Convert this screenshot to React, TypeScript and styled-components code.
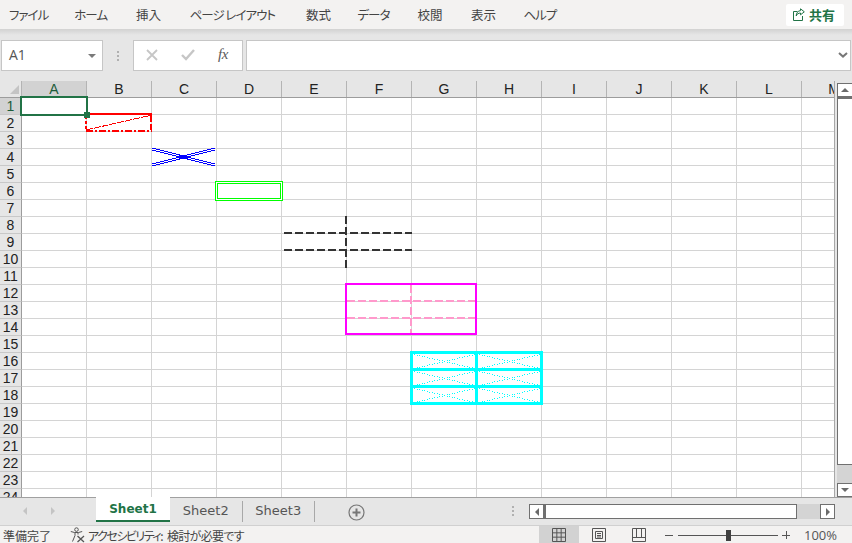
import React from "react"
import styled, { createGlobalStyle } from "styled-components"

const green = "#217346"
const jp = `"Noto Sans CJK JP", "Liberation Sans", sans-serif`

const GlobalStyle = createGlobalStyle`
  html, body {
    margin: 0;
    padding: 0;
    background: #e6e6e6;
    overflow: hidden;
  }
  * {
    box-sizing: border-box;
  }
`

const Page = styled.div`
  width: 852px;
  height: 543px;
  display: flex;
  flex-direction: column;
  overflow: hidden;
  font-family: ${jp};
  font-feature-settings: "palt";
`

const MenuBar = styled.div`
  height: 29px;
  flex: none;
  display: flex;
  align-items: center;
  padding: 0 9px;
  background: #f3f2f1;
`

const MenuItem = styled.div<{ $kana?: boolean; $gap: number }>`
  font-size: 12.5px;
  line-height: 29px;
  margin-right: ${p => p.$gap}px;
  letter-spacing: ${p => (p.$kana ? -1 : 0)}px;
  color: #444;
  white-space: nowrap;
`

const ShareButton = styled.div`
  margin-left: auto;
  width: 58px;
  height: 22px;
  margin-right: -1px;
  display: flex;
  align-items: center;
  gap: 4px;
  padding-left: 7px;
  background: #fff;
  border-radius: 2px;
  color: ${green};
  font-size: 13px;
  font-weight: 700;
`

const FormulaBar = styled.div`
  height: 52px;
  flex: none;
  display: flex;
  align-items: flex-start;
  padding: 11px 1px 0 1px;
  background: linear-gradient(#d2d2d1, #e6e6e6 6px);
`

const FieldBox = styled.div`
  height: 31px;
  background: #fff;
  border: 1px solid #c6c6c6;
  display: flex;
  align-items: center;
`

const NameBox = styled(FieldBox)`
  width: 102px;
  padding: 0 6px 3px 7px;
  justify-content: space-between;
  font-family: "Open Sans", sans-serif;
  font-size: 14px;
  color: #555;
`

const Caret = styled.span`
  width: 0;
  height: 0;
  margin-top: 3px;
  border-left: 4px solid transparent;
  border-right: 4px solid transparent;
  border-top: 4px solid #7a7a7a;
`

const GripColumn = styled.div`
  width: 30px;
  height: 31px;
  display: flex;
  align-items: center;
  justify-content: center;
`

const Grip = styled.div`
  display: flex;
  flex-direction: column;
  gap: 2px;

  span {
    width: 2px;
    height: 2px;
    background: #b0b0b0;
  }
`

const ActionBox = styled(FieldBox)`
  width: 110px;
  margin-right: 3px;
  padding: 0 0 2px 12px;
`

const FxLabel = styled.span`
  margin-left: 23px;
  font-family: "Liberation Serif", serif;
  font-style: italic;
  font-size: 15px;
  color: #5a5a5a;
  letter-spacing: -0.5px;
`

const InputBox = styled(FieldBox)`
  flex: 1;
  justify-content: flex-end;
  padding: 0 2px 2px 0;
`

const SheetArea = styled.div`
  height: 416px;
  flex: none;
  display: flex;
  background: #e6e6e6;
`

const GridPane = styled.div`
  position: relative;
  width: 835px;
  flex: none;
  overflow: hidden;
  background: #fff;
  border-right: 1px solid #a8a8a8;
`

const HeaderRow = styled.div`
  height: 17px;
  display: flex;
  background: #e6e6e6;
  border-bottom: 1px solid #9c9c9c;
`

const Corner = styled.div`
  width: 22px;
  flex: none;
  position: relative;
  border-right: 1px solid #b4b4b4;

  &::after {
    content: "";
    position: absolute;
    left: 10px;
    top: 4px;
    width: 9px;
    height: 9px;
    background: #c4c4c4;
    clip-path: polygon(100% 0, 100% 100%, 0 100%);
  }
`

const ColHeader = styled.div<{ $active?: boolean }>`
  width: 65px;
  flex: none;
  text-align: center;
  font-family: "Liberation Sans", sans-serif;
  font-size: 14px;
  line-height: 17px;
  color: ${p => (p.$active ? "#1d5c3a" : "#222")};
  background: ${p => (p.$active ? "#d2d2d2" : "transparent")};
  border-right: 1px solid #b4b4b4;
`

const Row = styled.div`
  height: 17px;
  display: flex;
`

const RowHeader = styled.div<{ $active?: boolean }>`
  width: 22px;
  flex: none;
  text-align: center;
  font-family: "Liberation Sans", sans-serif;
  font-size: 14px;
  line-height: 17px;
  color: ${p => (p.$active ? "#1d5c3a" : "#222")};
  background: ${p => (p.$active ? "#d2d2d2" : "#e6e6e6")};
  border-right: 1px solid #9c9c9c;
  border-bottom: 1px solid #c8c8c8;
`

const Cell = styled.div`
  width: 65px;
  flex: none;
  border-right: 1px solid #d4d4d4;
  border-bottom: 1px solid #d4d4d4;
`

const Selection = styled.div`
  position: absolute;
  left: 20px;
  top: 15px;
  width: 68px;
  height: 20px;
  border: 2px solid ${green};
`

const Handle = styled.div`
  position: absolute;
  right: -4px;
  bottom: -4px;
  width: 6px;
  height: 6px;
  background: ${green};
  border: 1px solid ${green};
`

const ShapesLayer = styled.svg`
  position: absolute;
  left: 0;
  top: 0;
  pointer-events: none;
`

const VScroll = styled.div`
  flex: 1;
  margin-left: 2px;
  padding-top: 2px;
  display: flex;
  flex-direction: column;
  background: #d4d4d4;
  box-shadow: inset 0 2px 0 #e6e6e6;
`

const VButton = styled.div`
  height: 14px;
  flex: none;
  display: flex;
  align-items: center;
  justify-content: center;
  background: #fff;
  border: 1px solid #707070;
  border-right: none;
`

const VThumb = styled.div`
  height: 368px;
  flex: none;
  background: #fff;
  border-left: 1px solid #707070;
  border-top: 2px solid #707070;
  border-bottom: 1px solid #707070;
`

const VSpacer = styled.div`
  flex: 1;
`

const Arrow = styled.span<{ $dir: "up" | "down" | "left" | "right"; $color?: string }>`
  width: 0;
  height: 0;
  border-style: solid;
  border-color: transparent;
  ${p => {
    const color = p.$color || "#6a6a6a"
    if (p.$dir === "up") return `border-width: 0 4px 4px; border-bottom-color: ${color};`
    if (p.$dir === "down") return `border-width: 4px 4px 0; border-top-color: ${color};`
    if (p.$dir === "left") return `border-width: 4px 4px 4px 0; border-right-color: ${color};`
    return `border-width: 4px 0 4px 4px; border-left-color: ${color};`
  }}
`

const TabBar = styled.div`
  height: 28px;
  flex: none;
  display: flex;
  align-items: flex-start;
  background: #e6e6e6;
  border-top: 1px solid #a0a0a0;
`

const TabNav = styled.div`
  width: 96px;
  height: 26px;
  flex: none;
  display: flex;
  align-items: center;
  gap: 24px;
  padding-left: 23px;
`

const ActiveTab = styled.div`
  width: 74px;
  height: 25px;
  margin-top: -1px;
  flex: none;
  text-align: center;
  background: #fff;
  border-bottom: 2px solid ${green};
  color: ${green};
  font-family: "DejaVu Sans", sans-serif;
  font-size: 12px;
  font-weight: 700;
  line-height: 25px;
`

const Tab = styled.div`
  width: 72.5px;
  height: 21px;
  margin-top: 3px;
  flex: none;
  text-align: center;
  border-right: 1px solid #a8a8a8;
  color: #555;
  font-family: "DejaVu Sans", sans-serif;
  font-size: 13px;
  line-height: 19px;
`

const AddSheet = styled.div`
  margin: 4px 0 0 33px;
  width: 17px;
  height: 17px;
  flex: none;
  color: #777;
`

const TabGrip = styled(Grip)`
  margin: 8px 15px 0 auto;
`

const HScroll = styled.div`
  width: 306px;
  height: 15px;
  margin: 6px 17px 0 0;
  flex: none;
  display: flex;
  background: #d4d4d4;
`

const HButton = styled.div`
  width: 15px;
  flex: none;
  display: flex;
  align-items: center;
  justify-content: center;
  background: #fff;
  border: 1px solid #707070;
`

const HThumb = styled.div`
  width: 253px;
  flex: none;
  background: #fff;
  border: 1px solid #707070;
  border-left: 2px solid #707070;
`

const StatusBar = styled.div`
  flex: 1;
  display: flex;
  align-items: center;
  padding-left: 3px;
  background: #f3f2f1;
  border-top: 1px solid #d0d0d0;
  color: #444;
  font-size: 12px;
  font-feature-settings: normal;
`

const AccessNote = styled.div`
  margin-left: 19px;
  display: flex;
  align-items: center;
  gap: 3px;
  font-size: 12px;
  font-feature-settings: "palt";
  white-space: nowrap;
`

const AccessLabel = styled.span`
  letter-spacing: -1.5px;
  margin-right: 2px;
`

const AccessState = styled.span`
  letter-spacing: -0.7px;
`

const ViewButtons = styled.div`
  margin-left: auto;
  display: flex;
  height: 100%;
`

const ViewButton = styled.div<{ $active?: boolean }>`
  width: 40px;
  display: flex;
  align-items: center;
  justify-content: center;
  background: ${p => (p.$active ? "#d2d2d2" : "transparent")};
`

const Zoom = styled.div`
  width: 187px;
  margin-left: 6px;
  flex: none;
  display: flex;
  align-items: center;
  color: #555;
`

const ZoomSign = styled.span`
  width: 8px;
  height: 1px;
  flex: none;
  position: relative;
  background: #555;
`

const PlusBar = styled.span`
  position: absolute;
  left: 3.5px;
  top: -3.5px;
  width: 1px;
  height: 8px;
  background: #555;
`

const ZoomTrack = styled.div`
  position: relative;
  width: 100px;
  height: 1px;
  margin: 0 4px 0 5px;
  flex: none;
  background: #555;
`

const ZoomThumb = styled.div`
  position: absolute;
  left: 48px;
  top: -5px;
  width: 5px;
  height: 11px;
  background: #404040;
`

const ZoomValue = styled.div`
  flex: 1;
  padding-left: 14px;
  font-family: "Open Sans", sans-serif;
  font-size: 13px;
  white-space: nowrap;
`

const menus = [
  { label: "ファイル", kana: true, gap: 26 },
  { label: "ホーム", kana: true, gap: 29 },
  { label: "挿入", gap: 28.5 },
  { label: "ページ レイアウト", kana: true, gap: 31 },
  { label: "数式", gap: 26.5 },
  { label: "データ", kana: true, gap: 28 },
  { label: "校閲", gap: 28.5 },
  { label: "表示", gap: 27.5 },
  { label: "ヘルプ", kana: true, gap: 0 },
]
const columns = "ABCDEFGHIJKLM".split("")
const rows = Array.from({ length: 24 }, (_, i) => i + 1)

// the thin dotted diagonals of G16:H18, one pixel per dot
const dottedCross = (left: number, top: number) => {
  let d = ""
  for (let step = 0; step <= 24; step++) {
    const x = left + Math.round(step * 2.5)
    const dy = Math.round((step / 24) * 14)
    d += `M${x} ${top + dy}h1v1h-1zM${x} ${top + 14 - dy}h1v1h-1z`
  }
  return d
}

const cyanDots = [354, 371, 388]
  .flatMap(top => [414, 479].map(left => dottedCross(left, top)))
  .join("")

const Dots = ({ as: Wrapper = Grip }: { as?: typeof Grip }) => (
  <Wrapper>
    <span />
    <span />
    <span />
  </Wrapper>
)

const ShareIcon = () => (
  <svg width="12" height="13" viewBox="0 0 12 13" fill="none" stroke={green} strokeWidth="1">
    <path d="M4.5 3.5H.5v9h9V8" />
    <path d="M7.5 .8 11.3 3.8 7.5 6.8V5C5.5 5 4 6 3.2 8 3.2 5 5 2.8 7.5 2.6Z" />
  </svg>
)

const CancelIcon = () => (
  <svg width="12" height="12" viewBox="0 0 12 12" stroke="#c6c6c6" strokeWidth="1.8" fill="none">
    <path d="M1 1 11 11M11 1 1 11" />
  </svg>
)

const CheckIcon = () => (
  <svg width="14" height="12" viewBox="0 0 14 12" stroke="#c6c6c6" strokeWidth="2.4" fill="none" style={{ marginLeft: 23 }}>
    <path d="M1 6 5 10 13 1" />
  </svg>
)

const ChevronIcon = () => (
  <svg width="10" height="6" viewBox="0 0 10 6" stroke="#777" strokeWidth="2" fill="none">
    <path d="M1 1 5 4.6 9 1" />
  </svg>
)

const AddIcon = () => (
  <svg width="17" height="17" viewBox="0 0 17 17" fill="none" stroke="currentColor">
    <circle cx="8.5" cy="8.5" r="7.5" strokeWidth="1.2" />
    <path d="M8.5 4.5v8M4.5 8.5h8" strokeWidth="2" />
  </svg>
)

const AccessIcon = () => (
  <svg width="15" height="16" viewBox="0 0 15 16" fill="none" stroke="#555" strokeWidth="1">
    <circle cx="6.5" cy="2.6" r="1.8" />
    <path d="M.8 4.5 4.5 5.5H8.5L12.2 4.5M5 5.5V8.5L2.5 14.5M8 5.5V7.5" />
    <path d="M7.5 9 14 15M14 9 7.5 15" strokeWidth="1.3" />
  </svg>
)

const NormalIcon = () => (
  <svg width="14" height="14" viewBox="0 0 14 14" fill="none" stroke="#555">
    <path d="M.5 .5h13v13H.5zM.5 4.83h13M.5 9.17h13M4.83 .5v13M9.17 .5v13" />
  </svg>
)

const LayoutIcon = () => (
  <svg width="14" height="14" viewBox="0 0 14 14" fill="none" stroke="#555">
    <path d="M.5 .5h13v13H.5zM3.5 3.5h7v7h-7zM5 5.5h4M5 7.5h4M5 9h4" />
  </svg>
)

const BreakIcon = () => (
  <svg width="14" height="14" viewBox="0 0 14 14" fill="none" stroke="#555">
    <path d="M.5 .5h13v13H.5zM.5 9.5h13M4.5 .5v9M9.5 .5v9" />
  </svg>
)

// svg coordinates below are page pixels, the pane starts at y=81
const Shapes = () => (
  <ShapesLayer width="835" height="416" viewBox="0 81 835 416" fill="none">
    {/* B2 */}
    <g stroke="#f00" shapeRendering="crispEdges">
      <path d="M87 114H152" strokeWidth="2" />
      <path d="M151 115V130" strokeWidth="2" strokeDasharray="7 2" />
      <path d="M86 116V130" strokeWidth="2" strokeDasharray="3 2" />
      <path d="M86 131H152" strokeWidth="2" strokeDasharray="7 2 2 2" />
      <path d="M86 130 152 115" strokeWidth="1" strokeDasharray="7 1" />
    </g>
    {/* C4 */}
    <g stroke="#00f" shapeRendering="crispEdges" strokeWidth="1">
      <path d="M152 148 215 164M152 150 215 166" />
      <path d="M152 164 215 148M152 166 215 150" />
    </g>
    {/* D6 */}
    <g stroke="#0f0" shapeRendering="crispEdges" strokeWidth="1">
      <rect x="215.5" y="181.5" width="67" height="19" fill="#fff" />
      <rect x="217.5" y="183.5" width="63" height="15" />
    </g>
    {/* E8:F10 */}
    <g stroke="#333" strokeWidth="2" strokeDasharray="8 3" shapeRendering="crispEdges">
      <path d="M284 233H412M284 250H412" />
      <path d="M346 216V268" />
    </g>
    {/* F12:G14 */}
    <g shapeRendering="crispEdges">
      <path d="M347 301H475M347 318H475M411 285V334" stroke="#f9c" strokeWidth="2" strokeDasharray="8 3" />
      <rect x="346" y="284" width="130" height="50" stroke="#f0f" strokeWidth="2" />
    </g>
    {/* G16:H18 */}
    <g shapeRendering="crispEdges">
      <path d={cyanDots} fill="#0ff" />
      <path d="M412 369.5H541M412 386.5H541M476.5 353V403" stroke="#0ff" strokeWidth="3" />
      <rect x="411.5" y="352.5" width="130" height="51" stroke="#0ff" strokeWidth="3" />
    </g>
  </ShapesLayer>
)

const App: React.FunctionComponent = () => {
  return (
    <Page>
      <GlobalStyle />
      <MenuBar>
        {menus.map(menu => (
          <MenuItem key={menu.label} $kana={menu.kana} $gap={menu.gap}>
            {menu.label}
          </MenuItem>
        ))}
        <ShareButton>
          <ShareIcon />
          共有
        </ShareButton>
      </MenuBar>

      <FormulaBar>
        <NameBox>
          A1
          <Caret />
        </NameBox>
        <GripColumn>
          <Dots />
        </GripColumn>
        <ActionBox>
          <CancelIcon />
          <CheckIcon />
          <FxLabel>fx</FxLabel>
        </ActionBox>
        <InputBox>
          <ChevronIcon />
        </InputBox>
      </FormulaBar>

      <SheetArea>
        <GridPane>
          <HeaderRow>
            <Corner />
            {columns.map(col => (
              <ColHeader key={col} $active={col === "A"}>
                {col}
              </ColHeader>
            ))}
          </HeaderRow>
          {rows.map(row => (
            <Row key={row}>
              <RowHeader $active={row === 1}>{row}</RowHeader>
              {columns.map(col => (
                <Cell key={col} />
              ))}
            </Row>
          ))}
          <Shapes />
          <Selection>
            <Handle />
          </Selection>
        </GridPane>
        <VScroll>
          <VButton>
            <Arrow $dir="up" />
          </VButton>
          <VThumb />
          <VSpacer />
          <VButton>
            <Arrow $dir="down" />
          </VButton>
        </VScroll>
      </SheetArea>

      <TabBar>
        <TabNav>
          <Arrow $dir="left" $color="#c4c4c4" />
          <Arrow $dir="right" $color="#c4c4c4" />
        </TabNav>
        <ActiveTab>Sheet1</ActiveTab>
        <Tab>Sheet2</Tab>
        <Tab>Sheet3</Tab>
        <AddSheet>
          <AddIcon />
        </AddSheet>
        <Dots as={TabGrip} />
        <HScroll>
          <HButton>
            <Arrow $dir="left" />
          </HButton>
          <HThumb />
          <VSpacer />
          <HButton>
            <Arrow $dir="right" />
          </HButton>
        </HScroll>
      </TabBar>

      <StatusBar>
        準備完了
        <AccessNote>
          <AccessIcon />
          <AccessLabel>アクセシビリティ:</AccessLabel>
          <AccessState>検討が必要です</AccessState>
        </AccessNote>
        <ViewButtons>
          <ViewButton $active>
            <NormalIcon />
          </ViewButton>
          <ViewButton>
            <LayoutIcon />
          </ViewButton>
          <ViewButton>
            <BreakIcon />
          </ViewButton>
        </ViewButtons>
        <Zoom>
          <ZoomSign />
          <ZoomTrack>
            <ZoomThumb />
          </ZoomTrack>
          <ZoomSign>
            <PlusBar />
          </ZoomSign>
          <ZoomValue>100%</ZoomValue>
        </Zoom>
      </StatusBar>
    </Page>
  )
}

export default App
